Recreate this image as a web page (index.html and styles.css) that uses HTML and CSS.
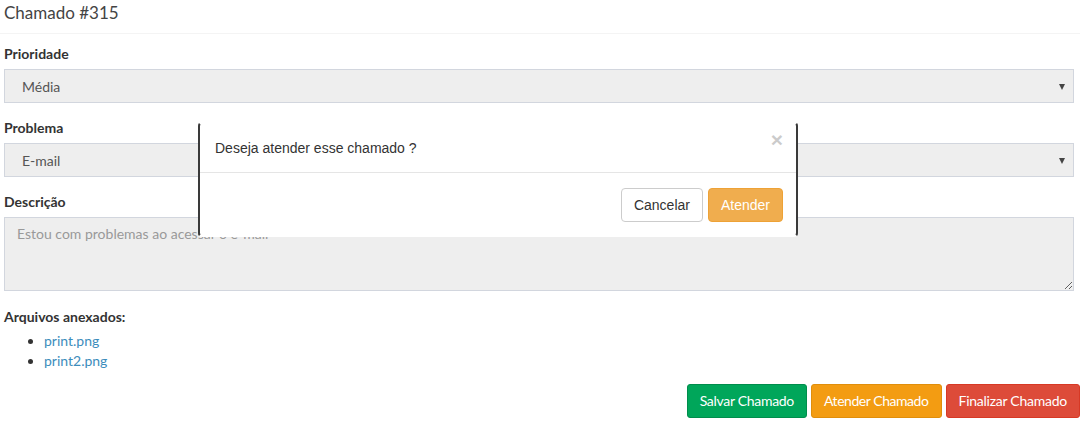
FILE: index.html
```html
<!DOCTYPE html>
<html lang="pt">
<head>
<meta charset="utf-8">
<title>Chamado #315</title>
<link rel="stylesheet" href="styles.css">
</head>
<body>
<div class="page">
  <h3 class="box-title">Chamado #315</h3>
  <form class="form">
    <div class="form-group">
      <label class="label">Prioridade</label>
      <div class="select"><span>Média</span><span class="caret"></span></div>
    </div>
    <div class="form-group">
      <label class="label">Problema</label>
      <div class="select"><span>E-mail</span><span class="caret"></span></div>
    </div>
    <div class="form-group">
      <label class="label">Descrição</label>
      <textarea class="textarea" placeholder="Estou com problemas ao acessar o e-mail"></textarea>
    </div>
    <div class="attachments">
      <div class="label">Arquivos anexados:</div>
      <ul class="files">
        <li><a href="#">print.png</a></li>
        <li><a href="#">print2.png</a></li>
      </ul>
    </div>
    <div class="actions">
      <button type="button" class="btn btn-success">Salvar Chamado</button>
      <button type="button" class="btn btn-warning">Atender Chamado</button>
      <button type="button" class="btn btn-danger">Finalizar Chamado</button>
    </div>
  </form>

  <div class="modal">
    <div class="modal-header">
      <span class="modal-title">Deseja atender esse chamado ?</span>
      <span class="close">×</span>
    </div>
    <div class="modal-footer">
      <button type="button" class="mbtn mbtn-default">Cancelar</button>
      <button type="button" class="mbtn mbtn-warning">Atender</button>
    </div>
  </div>
</div>
</body>
</html>
```

FILE: styles.css
```css
* { box-sizing: border-box; }
html, body { margin: 0; padding: 0; background: #fff; }
body {
  font-family: "Lato", "Open Sans", sans-serif;
  font-size: 14px;
  color: #333;
}
.page {
  position: relative;
  width: 1082px;
  height: 428px;
  padding: 0 2px 0 4px;
}
.box-title {
  margin: 0;
  font-weight: 400;
  font-size: 17px;
  line-height: 26px;
  color: #444;
  height: 34px;
  border-bottom: 1px solid #f4f4f4;
  margin-left: -4px;
  padding-left: 4px;
}
.form { padding-top: 10px; }
.form-group { margin-bottom: 15px; width: 1070px; }
.label {
  display: block;
  font-weight: 700;
  line-height: 20px;
  margin-bottom: 5px;
  color: #333;
}
.select {
  height: 34px;
  background: #eee;
  border: 1px solid #d2d6de;
  display: flex;
  align-items: center;
  justify-content: space-between;
  padding: 0 8px 0 17px;
  color: #555;
}
.caret {
  width: 0; height: 0;
  border-left: 3.5px solid transparent;
  border-right: 3.5px solid transparent;
  border-top: 6px solid #444;
  margin-top: 1px;
}
.textarea {
  display: block;
  width: 1070px;
  height: 74px;
  margin: 0;
  background: #eee;
  border: 1px solid #d2d6de;
  border-radius: 0;
  padding: 6px 12px;
  font-family: inherit;
  font-size: 14px;
  line-height: 20px;
  color: #555;
  resize: vertical;
}
.textarea::placeholder { color: #999; opacity: 1; }
.attachments { padding-top: 1px; }
.attachments .label { margin-bottom: 4px; }
.files {
  margin: 0;
  padding-left: 40px;
  line-height: 20px;
}
.files a { color: #3c8dbc; text-decoration: none; }
.actions {
  margin-top: 13px;
  display: flex;
  justify-content: flex-end;
  gap: 4px;
}
.btn {
  height: 34px;
  padding: 6px 12px;
  border: 1px solid transparent;
  border-radius: 3px;
  font-family: inherit;
  font-size: 14px;
  line-height: 20px;
  letter-spacing: -0.3px;
  color: #fff;
}
.btn-success { background: #00a65a; border-color: #008d4c; }
.btn-warning { background: #f39c12; border-color: #e08e0b; letter-spacing: -0.45px; }
.btn-danger { background: #dd4b39; border-color: #d73925; letter-spacing: -0.25px; }

.modal {
  position: absolute;
  left: 198px;
  top: 122px;
  width: 600px;
  background: #fff;
  border: 2px solid #3a3a3a;
  border-top-color: transparent;
  border-bottom-color: transparent;
  border-radius: 4px;
  font-family: "Liberation Sans", Arial, sans-serif;
  color: #333;
}
.modal-header {
  height: 49px;
  padding: 13px 13px 0 15px;
  border-bottom: 1px solid #e5e5e5;
  display: flex;
  justify-content: space-between;
  align-items: flex-start;
}
.modal-title { font-size: 14px; line-height: 20px; padding-top: 1px; }
.close {
  font-size: 21px;
  font-weight: 700;
  line-height: 1;
  color: #000;
  opacity: .2;
  margin-top: -8px;
  margin-right: 0;
}
.modal-footer {
  padding: 15px 13px 13px 15px;
  display: flex;
  justify-content: flex-end;
  gap: 5px;
}
.mbtn {
  height: 34px;
  padding: 6px 12px;
  border: 1px solid #ccc;
  border-radius: 4px;
  font-family: "Liberation Sans", Arial, sans-serif;
  font-size: 14px;
  line-height: 20px;
  color: #333;
  background: #fff;
}
.mbtn-warning { background: #f0ad4e; border-color: #eea236; color: #fff; }
```
